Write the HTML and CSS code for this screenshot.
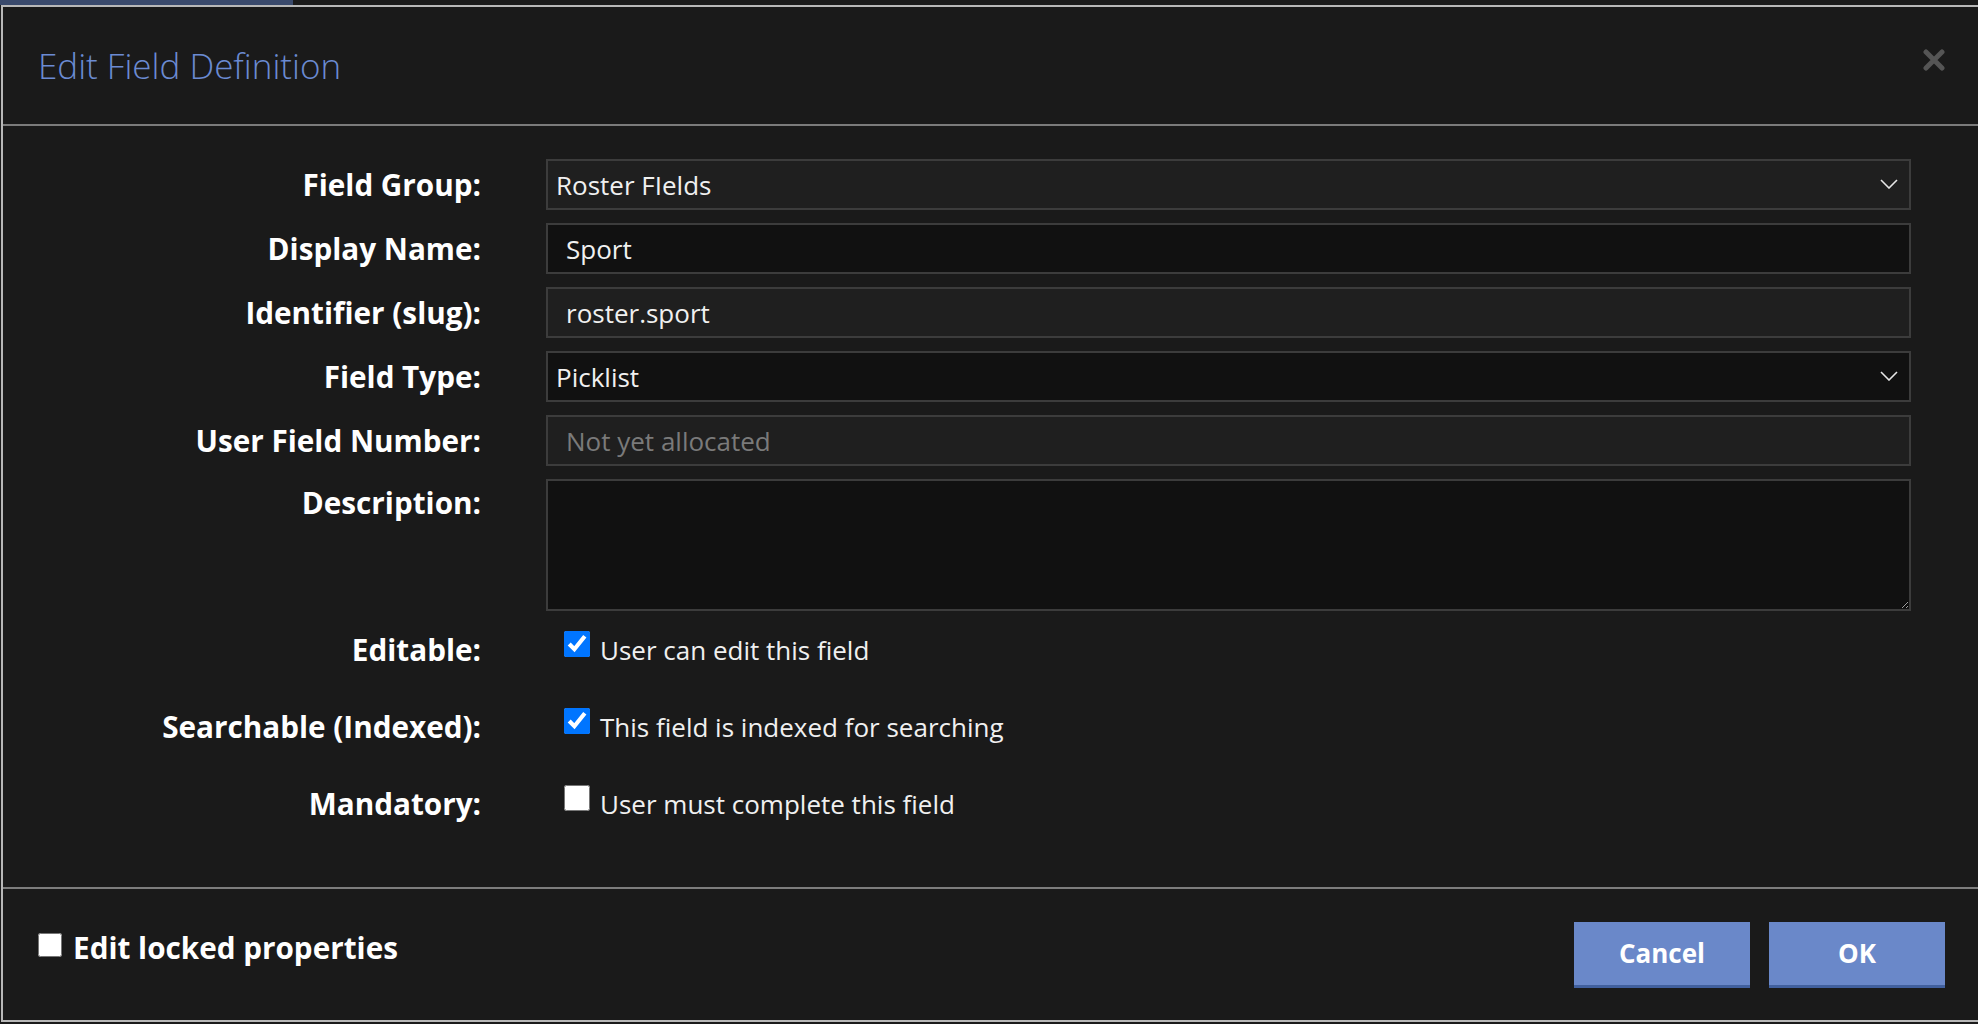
FILE: index.html
```html
<!DOCTYPE html>
<html lang="en">

<head>
    <meta charset="UTF-8">
    <meta name="viewport" content="width=device-width, initial-scale=1.0">
    <title>Edit Field Definition</title>
    <link rel="stylesheet" href="styles.css">
</head>

<body>
    <div class="backdrop">
        <div class="backdrop-tab"></div>
    </div>

    <div class="dialog">
        <div class="dialog-header">
            <h1 class="dialog-title">Edit Field Definition</h1>
            <button type="button" class="dialog-close" title="Close">
                <svg width="22" height="22" viewBox="0 0 22 22">
                    <path d="M3 3 L19 19 M19 3 L3 19" stroke="#555" stroke-width="5" stroke-linecap="round" fill="none" />
                </svg>
            </button>
        </div>

        <div class="dialog-body">
            <div class="form-row">
                <label class="form-label">Field Group:</label>
                <div class="select-wrap">
                    <select class="form-control light">
                        <option>Roster FIelds</option>
                    </select>
                    <svg class="chevron" width="18" height="10" viewBox="0 0 18 10">
                        <path d="M1 1 L9 9 L17 1" stroke="#e6e6e6" stroke-width="1.6" fill="none" />
                    </svg>
                </div>
            </div>
            <div class="form-row">
                <label class="form-label">Display Name:</label>
                <input type="text" class="form-control dark text-input" value="Sport">
            </div>
            <div class="form-row">
                <label class="form-label">Identifier (slug):</label>
                <input type="text" class="form-control light text-input" value="roster.sport">
            </div>
            <div class="form-row">
                <label class="form-label">Field Type:</label>
                <div class="select-wrap">
                    <select class="form-control dark">
                        <option>Picklist</option>
                    </select>
                    <svg class="chevron" width="18" height="10" viewBox="0 0 18 10">
                        <path d="M1 1 L9 9 L17 1" stroke="#e6e6e6" stroke-width="1.6" fill="none" />
                    </svg>
                </div>
            </div>
            <div class="form-row">
                <label class="form-label">User Field Number:</label>
                <input type="text" class="form-control light text-input" placeholder="Not yet allocated" disabled>
            </div>
            <div class="form-row top">
                <label class="form-label">Description:</label>
                <textarea class="form-control dark description"></textarea>
            </div>

            <!-- flags -->
            <div class="form-row check-row">
                <label class="form-label">Editable:</label>
                <label class="check-option"><input type="checkbox" checked> User can edit this field</label>
            </div>
            <div class="form-row check-row">
                <label class="form-label">Searchable (Indexed):</label>
                <label class="check-option"><input type="checkbox" checked> This field is indexed for searching</label>
            </div>
            <div class="form-row check-row">
                <label class="form-label">Mandatory:</label>
                <label class="check-option"><input type="checkbox"> User must complete this field</label>
            </div>
        </div>

        <div class="dialog-footer">
            <label class="locked-option"><input type="checkbox"> Edit locked properties</label>
            <div class="footer-buttons">
                <button type="button" class="btn">Cancel</button>
                <button type="button" class="btn">OK</button>
            </div>
        </div>
    </div>
</body>

</html>
```

FILE: styles.css
```css
* {
    box-sizing: border-box;
}

html,
body {
    overflow: hidden;
}

body {
    margin: 0;
    padding: 0;
    height: 1024px;
    background-color: #1b1b1b;
    font-family: "Open Sans", "Liberation Sans", sans-serif;
    color: #fff;
}

/* page behind the modal */
.backdrop {
    height: 5px;
    display: flex;
}
.backdrop-tab {
    width: 293px;
    background-color: #3a4a6c;
}

.dialog {
    width: 1980px;
    margin-left: 1px;
    border: 2px solid #b8b8b8;
    background-color: #1a1a1a;
}

.dialog-header {
    height: 119px;
    border-bottom: 2px solid #7b7b7b;
    padding: 0 34px 0 35px;
    display: flex;
    justify-content: space-between;
    align-items: center;
}
.dialog-title {
    margin: 0;
    font-size: 35px;
    font-weight: 300;
    color: #6b8bd2;
}
.dialog-close {
    background: none;
    border: none;
    padding: 0;
    margin-bottom: 11px;
    width: 22px;
    height: 22px;
    cursor: pointer;
}

.dialog-body {
    height: 761px;
    padding-top: 33px;
}

.form-row {
    display: grid;
    grid-template-columns: 478px 1365px;
    column-gap: 65px;
    align-items: center;
    margin-bottom: 13px;
}
.form-row.top {
    align-items: start;
    margin-bottom: 0;
}
.form-row.top .form-label {
    padding-top: 3px;
}
.form-label {
    text-align: right;
    font-size: 29.7px;
    font-weight: 700;
    color: #fff;
}

.form-control {
    width: 100%;
    height: 51px;
    border: 2px solid #3c3c3c;
    border-radius: 0;
    font-family: inherit;
    font-size: 26px;
    color: #f0f0f0;
    outline: none;
}
.form-control.light {
    background-color: #1f1f1f;
}
.form-control.dark {
    background-color: #111;
}
.text-input {
    padding: 0 18px;
}
.text-input::placeholder {
    color: #7a7a7a;
}
.text-input:disabled {
    color: #7a7a7a;
}

.select-wrap {
    position: relative;
}
.select-wrap select {
    appearance: none;
    padding: 0 8px;
}
.select-wrap .chevron {
    position: absolute;
    right: 13px;
    top: 20px;
    pointer-events: none;
}

.description {
    height: 132px;
    padding: 8px 18px;
    resize: vertical;
    color-scheme: dark;
}

.check-row {
    height: 77px;
    margin-bottom: 0;
}
.check-option {
    display: flex;
    align-items: center;
    gap: 10px;
    padding-left: 18px;
    font-size: 26px;
    color: #f0f0f0;
}
.check-option input,
.locked-option input {
    width: 26px;
    height: 26px;
    margin: 0 0 11px 0;
    accent-color: #0075ff;
}

.dialog-footer {
    height: 133px;
    border-top: 2px solid #7d7d7d;
    padding: 0 34px 0 35px;
    display: flex;
    justify-content: space-between;
    align-items: center;
}
.locked-option {
    display: flex;
    align-items: center;
    gap: 11px;
    margin-bottom: 14px;
    font-size: 29.7px;
    font-weight: 700;
}
.locked-option input {
    width: 24px;
    height: 24px;
    margin-bottom: 6px;
}

.footer-buttons {
    display: flex;
    gap: 19px;
}
.btn {
    width: 176px;
    height: 66px;
    border: none;
    border-bottom: 3px solid #41609e;
    background-color: #6a88c9;
    color: #fff;
    font-family: inherit;
    font-size: 26px;
    font-weight: 700;
    cursor: pointer;
}
```
